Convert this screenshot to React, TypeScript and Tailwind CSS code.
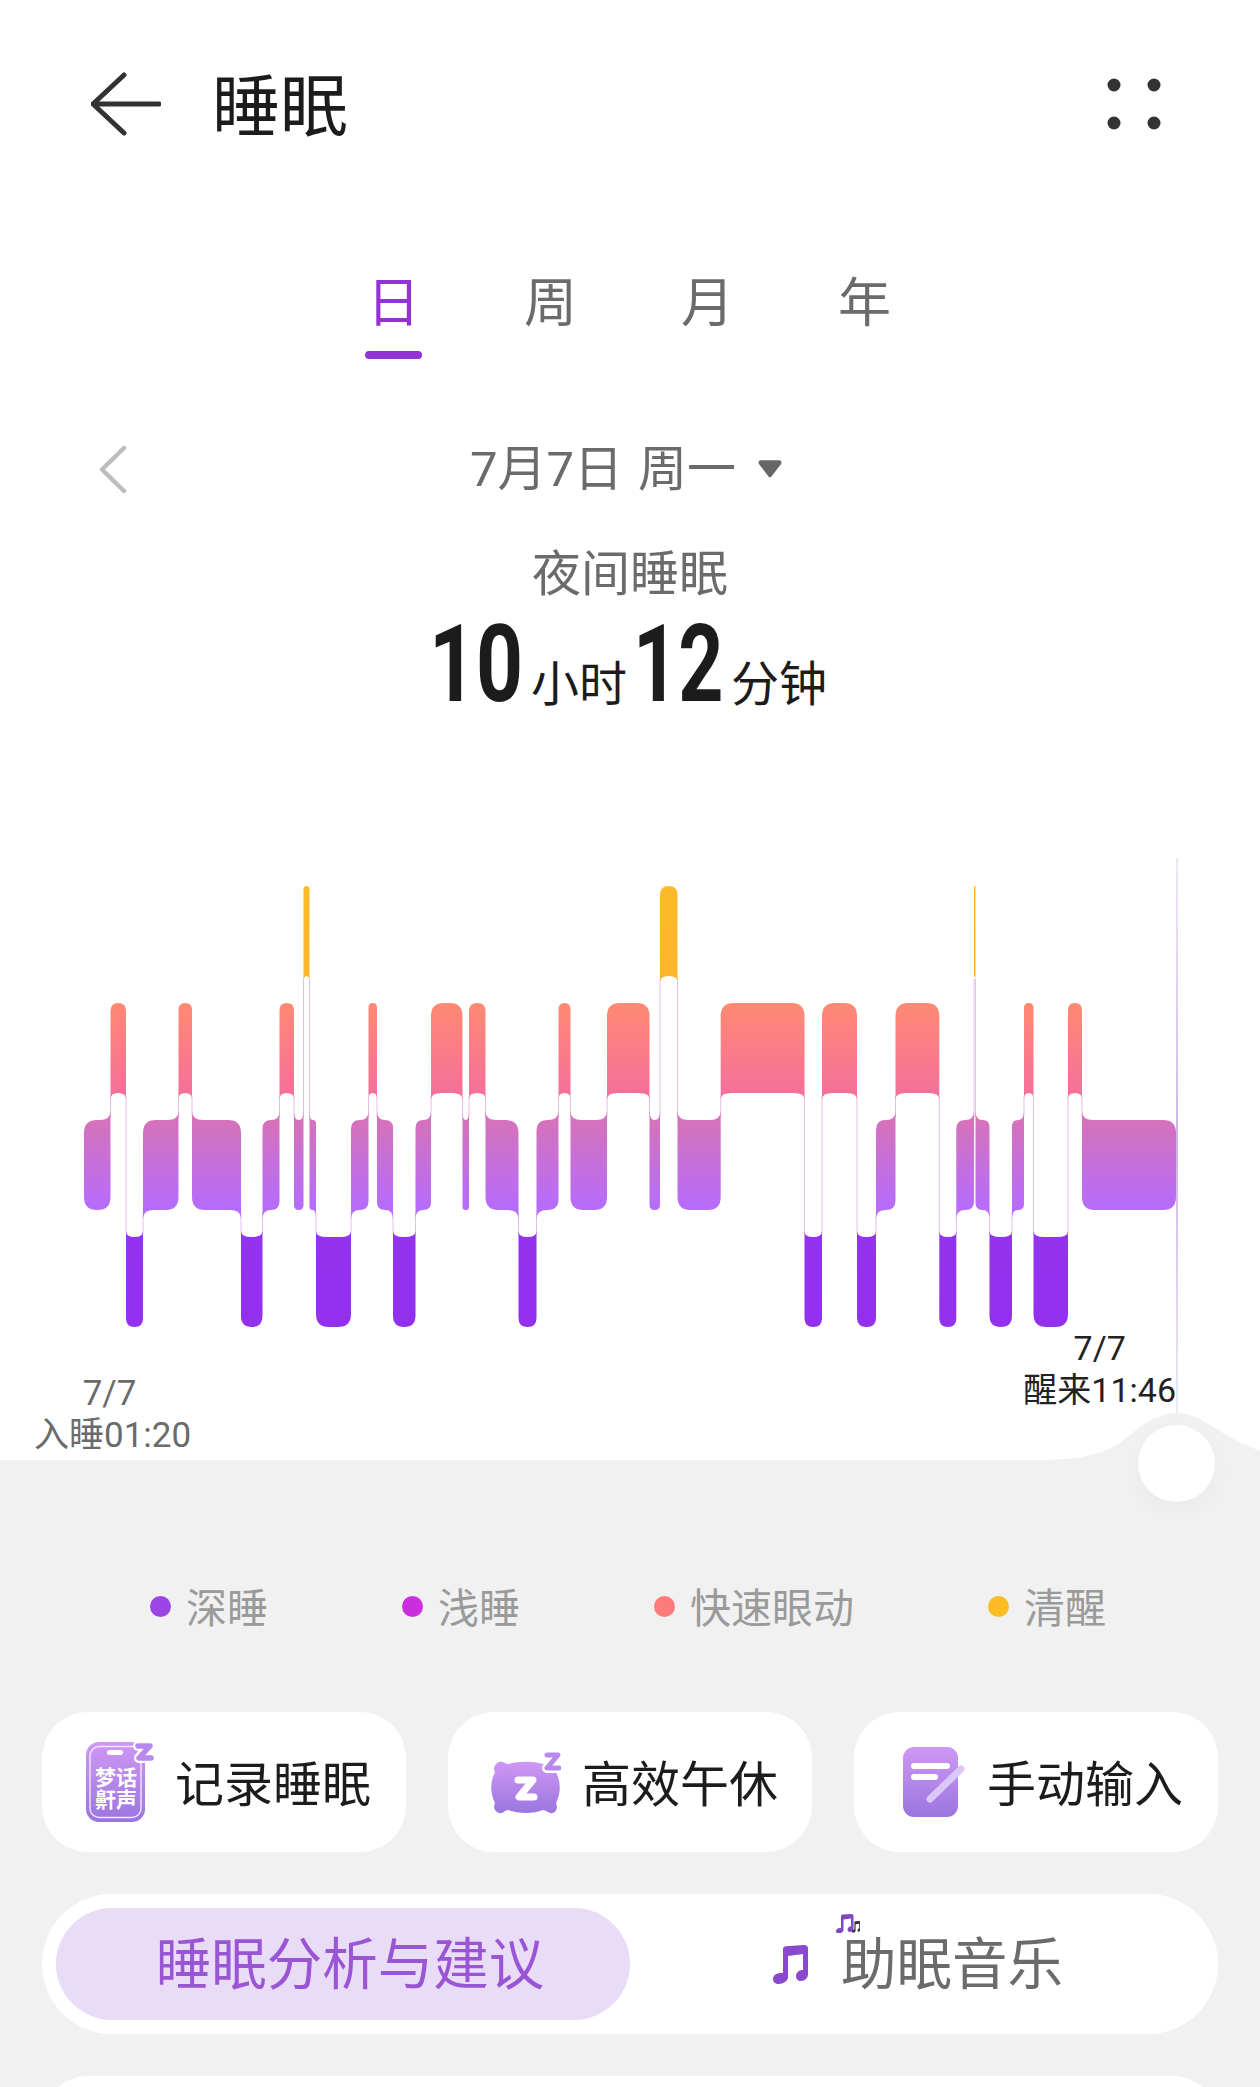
import React from "react";

type Seg = [number, number, number];
const SEGS: Seg[] = [
  [2, 84, 110.5], [1, 110.5, 126], [3, 126, 143], [2, 143, 178.5], [1, 178.5, 192], [2, 192, 241],
  [3, 241, 262.5], [2, 262.5, 279.5], [1, 279.5, 294], [2, 294, 303.5], [0, 303.5, 309.5], [2, 309.5, 316],
  [3, 316, 351], [2, 351, 368.5], [1, 368.5, 377], [2, 377, 393], [3, 393, 415.5], [2, 415.5, 431],
  [1, 431, 462.5], [2, 462.5, 469], [1, 469, 485.5], [2, 485.5, 518.5], [3, 518.5, 536.5], [2, 536.5, 558.5],
  [1, 558.5, 570.5], [2, 570.5, 607], [1, 607, 649.5], [2, 649.5, 660], [0, 660, 677.5], [2, 677.5, 720.7],
  [1, 720.7, 804.5], [3, 804.5, 822], [1, 822, 857], [3, 857, 876], [2, 876, 895.5], [1, 895.5, 939.3],
  [3, 939.3, 956.3], [2, 956.3, 974], [0, 974, 975.5], [2, 975.5, 989.5], [3, 989.5, 1012], [2, 1012, 1024],
  [1, 1024, 1033.5], [3, 1033.5, 1068], [1, 1068, 1082], [2, 1082, 1176],
];
const Y0 = 880;
const TOPS = [886, 1003, 1120, 1237].map((y) => y - Y0);
const H = 90;
const FILLS = ["url(#aw)", "url(#rem)", "url(#li)", "url(#de)"];
const FLARE_Y = [0, 6, 9, 6];

function segPath(i: number) {
  const [lv, x1, x2] = SEGS[i];
  const p = i > 0 ? SEGS[i - 1][0] : lv;
  const n = i < SEGS.length - 1 ? SEGS[i + 1][0] : lv;
  const t = TOPS[lv];
  const b = t + H;
  const w = x2 - x1;
  const r = Math.min(13, w / 2);
  const fx = Math.min(11, w / 2);
  const fy = FLARE_Y[lv] || 6;
  let d = "";
  d += p < lv ? `M${x1} ${t - fy}Q${x1} ${t} ${x1 + fx} ${t}` : `M${x1} ${t + r}Q${x1} ${t} ${x1 + r} ${t}`;
  d += n < lv ? `L${x2 - fx} ${t}Q${x2} ${t} ${x2} ${t - fy}` : `L${x2 - r} ${t}Q${x2} ${t} ${x2} ${t + r}`;
  d += n > lv ? `L${x2} ${b + fy}Q${x2} ${b} ${x2 - fx} ${b}` : `L${x2} ${b - r}Q${x2} ${b} ${x2 - r} ${b}`;
  d += p > lv ? `L${x1 + fx} ${b}Q${x1} ${b} ${x1} ${b + fy}Z` : `L${x1 + r} ${b}Q${x1} ${b} ${x1} ${b - r}Z`;
  return d;
}

function SleepChart() {
  return (
    <svg width="1260" height="452" viewBox="0 0 1260 452" className="block">
      <defs>
        <linearGradient id="aw" gradientUnits="userSpaceOnUse" x1="0" x2="0" y1={TOPS[0]} y2={TOPS[0] + H}>
          <stop offset="0" stopColor="#fdbb26" />
          <stop offset="1" stopColor="#fcb52c" />
        </linearGradient>
        <linearGradient id="rem" gradientUnits="userSpaceOnUse" x1="0" x2="0" y1={TOPS[1]} y2={TOPS[1] + H}>
          <stop offset="0" stopColor="#ff8a72" />
          <stop offset="1" stopColor="#f4709a" />
        </linearGradient>
        <linearGradient id="li" gradientUnits="userSpaceOnUse" x1="0" x2="0" y1={TOPS[2]} y2={TOPS[2] + H}>
          <stop offset="0" stopColor="#d672ba" />
          <stop offset="1" stopColor="#b56cfd" />
        </linearGradient>
        <linearGradient id="de" gradientUnits="userSpaceOnUse" x1="0" x2="0" y1={TOPS[3]} y2={TOPS[3] + H}>
          <stop offset="0" stopColor="#9433ee" />
          <stop offset="1" stopColor="#9230ee" />
        </linearGradient>
      </defs>
      {SEGS.slice(1).map(([lv, x1], i) => {
        const pv = SEGS[i][0];
        const a = Math.min(lv, pv);
        const c = Math.max(lv, pv);
        return (
          <line key={i} x1={x1} x2={x1} y1={TOPS[a] + H + 3} y2={TOPS[c] - 3} stroke="#e6c0ec" strokeWidth="1" />
        );
      })}
      {SEGS.map(([lv], i) => (
        <path key={i} d={segPath(i)} fill={FILLS[lv]} />
      ))}
    </svg>
  );
}

function RecordIcon() {
  return (
    <svg width="68" height="80" viewBox="0 0 68 80" className="shrink-0">
      <defs>
        <linearGradient id="ic1" x1="0" x2="0" y1="0" y2="1">
          <stop offset="0" stopColor="#cf98f4" />
          <stop offset="1" stopColor="#9a75df" />
        </linearGradient>
      </defs>
      <rect x="0" y="0" width="59" height="80" rx="13" fill="url(#ic1)" />
      <rect x="4" y="4.5" width="51" height="71" rx="9" fill="none" stroke="#f3e6fb" strokeWidth="1.4" />
      <rect x="21" y="8" width="16" height="5" rx="2.5" fill="#fff" />
      <text x="30" y="43" textAnchor="middle" fontSize="21" fontWeight="700" fill="#fff" fontFamily="'Noto Sans CJK SC',sans-serif">梦话</text>
      <text x="30" y="65" textAnchor="middle" fontSize="21" fontWeight="700" fill="#fff" fontFamily="'Noto Sans CJK SC',sans-serif">鼾声</text>
      <path d="M52 4H64L53 16H65" fill="none" stroke="#fff" strokeWidth="10" strokeLinecap="round" strokeLinejoin="round" />
      <path d="M52 4H64L53 16H65" fill="none" stroke="#b888ec" strokeWidth="5.5" strokeLinecap="round" strokeLinejoin="round" />
    </svg>
  );
}

function NapIcon() {
  return (
    <svg width="70" height="63" viewBox="0 0 70 63" className="shrink-0">
      <defs>
        <linearGradient id="ic2" gradientUnits="userSpaceOnUse" x1="0" x2="0" y1="10" y2="63">
          <stop offset="0" stopColor="#cf98f4" />
          <stop offset="1" stopColor="#9a75df" />
        </linearGradient>
      </defs>
      <path
        d="M8 11C12 10 14 13 17 13C28 10 42 10 52 13C55 13 58 10 62 11C66 13 66 18 65 21C70 31 70 42 65 52C67 56 66 60 62 62C58 63 55 59 52 59C42 63 28 63 17 59C14 59 12 63 8 62C3 60 2 56 4 52C-1 42 -1 31 4 21C2 18 3 13 8 11Z"
        fill="url(#ic2)"
      />
      <path d="M27 29H42L28 46H43" fill="none" stroke="#fff" strokeWidth="7" strokeLinecap="round" strokeLinejoin="round" />
      <path d="M56 4H67L56 17H68" fill="none" stroke="#fff" strokeWidth="10" strokeLinecap="round" strokeLinejoin="round" />
      <path d="M56 4H67L56 17H68" fill="none" stroke="#b888ec" strokeWidth="5" strokeLinecap="round" strokeLinejoin="round" />
    </svg>
  );
}

function ManualIcon() {
  return (
    <svg width="62" height="70" viewBox="0 0 62 70" className="shrink-0">
      <defs>
        <linearGradient id="ic3" x1="0" x2="0" y1="0" y2="1">
          <stop offset="0" stopColor="#cf98f4" />
          <stop offset="1" stopColor="#9a75df" />
        </linearGradient>
      </defs>
      <rect x="0" y="0" width="55" height="70" rx="11" fill="url(#ic3)" />
      <rect x="8" y="16" width="39" height="6" rx="3" fill="#fff" />
      <rect x="8" y="27" width="27" height="6" rx="3" fill="#fff" />
      <path d="M27 52L58 22" stroke="#dcc8f8" strokeWidth="7" strokeLinecap="round" />
    </svg>
  );
}

const NOTE =
  "M10 4Q10 1.5 13 1.2L31 0Q35 0 35 3.5V29C35 33 32 36 28 36C25 36 23 34 23 31C23 28 26 25 29 25L30 25V9L15 11V32C15 36 10 39 6 39C2 39 0 37 0 34C0 30 4 28 8 28L10 28Z";

function BigNote() {
  return (
    <svg width="35" height="39" viewBox="0 0 35 39" className="shrink-0">
      <path d={NOTE} fill="#8a48cf" />
    </svg>
  );
}

function SmallNotes() {
  return (
    <svg width="24" height="19" viewBox="0 0 48 38" className="block">
      <path d={NOTE} fill="#7f48c4" />
      <g transform="translate(32 14) scale(0.48 0.6)">
        <path d={NOTE} fill="#333" />
      </g>
    </svg>
  );
}

function Legend({ color, label }: { color: string; label: string }) {
  return (
    <div className="flex items-center gap-[15px]">
      <span className="block h-[21px] w-[21px] rounded-full" style={{ backgroundColor: color }} />
      <span className="pt-[5px] text-[41px] leading-[56px] text-[#9a9a9a]">{label}</span>
    </div>
  );
}

function ActionButton({ icon, label, pl, gap }: { icon: React.ReactNode; label: string; pl: string; gap: string }) {
  return (
    <div className={`flex h-[140px] items-center rounded-[46px] bg-white ${pl} ${gap}`}>
      {icon}
      <span className="whitespace-nowrap pt-[7px] text-[49px] leading-none text-[#1c1c1c]">{label}</span>
    </div>
  );
}

export default function App() {
  return (
    <div className="relative h-[2087px] w-[1260px] overflow-hidden bg-white font-['Roboto','Noto_Sans_CJK_SC',sans-serif]">
      <header className="flex h-[208px] items-center justify-between pl-[91px] pr-[99px]">
        <div className="flex items-center gap-[51px]">
          <svg width="70" height="66" viewBox="0 0 70 66" fill="none" stroke="#333" strokeWidth="5" strokeLinecap="round" strokeLinejoin="round">
            <path d="M2 33H68M33 4L2 33L33 62" />
          </svg>
          <h1 className="pt-[8px] text-[68px] font-normal leading-none text-[#1c1c1c]">睡眠</h1>
        </div>
        <svg width="54" height="52" viewBox="0 0 54 52" fill="#333">
          <circle cx="7" cy="7" r="6.5" />
          <circle cx="47" cy="7" r="6.5" />
          <circle cx="7" cy="45" r="6.5" />
          <circle cx="47" cy="45" r="6.5" />
        </svg>
      </header>

      <nav className="mt-[61px] flex items-start pl-[315px]">
        <div className="flex w-[157px] flex-col items-center">
          <span className="h-[70px] text-[53px] leading-[70px] text-[#9333d6]">日</span>
          <span className="mt-[12px] block h-[8px] w-[57px] rounded-full bg-[#9333d6]" />
        </div>
        <span className="h-[70px] w-[157px] text-center text-[53px] leading-[70px] text-[#6b6b6b]">周</span>
        <span className="h-[70px] w-[157px] text-center text-[53px] leading-[70px] text-[#6b6b6b]">月</span>
        <span className="h-[70px] w-[157px] text-center text-[53px] leading-[70px] text-[#6b6b6b]">年</span>
      </nav>

      <div className="mt-[81px] flex h-[60px] items-center pl-[99px]">
        <svg width="28" height="50" viewBox="0 0 28 50" fill="none" stroke="#bdbdbd" strokeWidth="4.5" strokeLinecap="round" strokeLinejoin="round">
          <path d="M25 3L3 24.5L25 46" />
        </svg>
        <div className="ml-[343px] flex gap-[15px] whitespace-nowrap text-[49px] leading-[60px] text-[#6b6b6b]">
          <span>7月7日</span>
          <span>周一</span>
        </div>
        <svg width="24" height="19" viewBox="0 0 26 20" className="ml-[22px] -translate-y-[2px]" fill="#666">
          <path d="M3 1H23C25 1 26 3 25 5L15 18C14 20 12 20 11 18L1 5C0 3 1 1 3 1Z" />
        </svg>
      </div>

      <div className="mt-[45px] h-[60px] text-center text-[49px] leading-[60px] text-[#6b6b6b]">夜间睡眠</div>

      <div className="mt-[3px] flex h-[112px] items-baseline pl-[429px] text-[#1c1c1c]">
        <span className="inline-block w-[102px] origin-left scale-x-[0.76] text-[108px] font-bold leading-[112px]">10</span>
        <span className="w-[102px] text-[48px]">小时</span>
        <span className="inline-block w-[98px] origin-left scale-x-[0.73] text-[108px] font-bold leading-[112px]">12</span>
        <span className="text-[48px]">分钟</span>
      </div>

      <div className="relative mt-[160px] h-[580px]">
        <SleepChart />
        <div className="absolute left-[1176px] top-[-22px] h-[570px] w-[2px] bg-gradient-to-b from-[#efe7f8] via-[#cdb5ea] to-[#f0ecf5]" />
        <div className="-mt-[5px] flex items-end justify-between pl-[34px] pr-[84px] leading-[42px]">
          <div className="text-center text-[35px] text-[#6b6b6b]">
            <div className="pr-[6px]">7/7</div>
            <div>入睡01:20</div>
          </div>
          <div className="mb-[46px] text-center text-[34px] text-[#222]">
            <div>7/7</div>
            <div>醒来11:46</div>
          </div>
        </div>
      </div>

      <section className="absolute left-0 top-[1460px] h-[627px] w-[1260px] bg-[#f1f1f1]">
        <svg width="220" height="48" viewBox="0 0 220 48" className="absolute right-0 top-[-47px]" fill="#f1f1f1">
          <path d="M0 47C25 47 50 44 67 37C80 31 92 20 100 14C113 5 125 0 137 0C150 0 162 6 183 20C195 27 208 33 220 38V48H0Z" />
        </svg>
        <div className="absolute left-[1138px] top-[-35px] h-[77px] w-[77px] rounded-full bg-white shadow-[0_8px_24px_rgba(0,0,0,0.03)]" />

        <div className="flex gap-[134px] pl-[150px] pt-[116px]">
          <Legend color="#9b45e5" label="深睡" />
          <Legend color="#cb2fdd" label="浅睡" />
          <Legend color="#fe7b7b" label="快速眼动" />
          <Legend color="#fdbd22" label="清醒" />
        </div>

        <div className="mt-[75px] grid grid-cols-3 gap-[42px] px-[42px]">
          <ActionButton icon={<RecordIcon />} label="记录睡眠" pl="pl-[44px]" gap="gap-[21px]" />
          <ActionButton icon={<NapIcon />} label="高效午休" pl="pl-[43px]" gap="gap-[21px]" />
          <ActionButton icon={<ManualIcon />} label="手动输入" pl="pl-[49px]" gap="gap-[22px]" />
        </div>

        <div className="mx-[42px] mt-[42px] flex h-[140px] items-center rounded-full bg-white px-[14px]">
          <div className="flex h-[112px] w-[574px] items-center justify-center rounded-full bg-[#e8dcf7] pl-[14px] pt-[4px] text-[55.5px] text-[#9a55d4]">
            睡眠分析与建议
          </div>
          <div className="relative flex items-center pl-[143px]">
            <BigNote />
            <span className="absolute left-[206px] top-[-20px]">
              <SmallNotes />
            </span>
            <span className="ml-[33px] whitespace-nowrap pt-[4px] text-[55.5px] leading-none text-[#6b6b6b]">助眠音乐</span>
          </div>
        </div>

        <div className="mx-[42px] mt-[42px] h-[100px] rounded-[46px] bg-white" />
      </section>
    </div>
  );
}
